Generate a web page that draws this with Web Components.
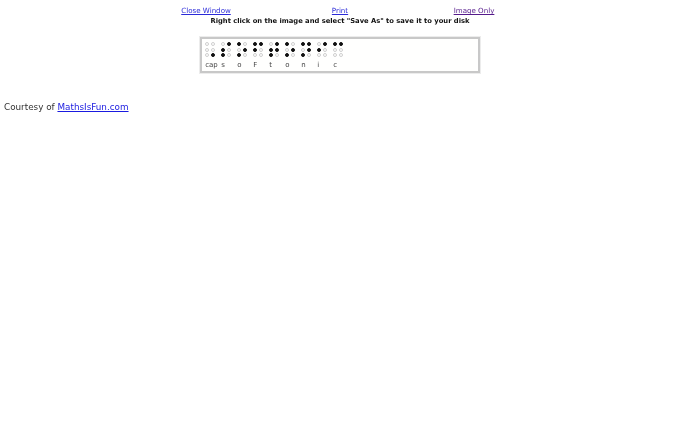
<!DOCTYPE html>
<html>
<head>
<meta charset="utf-8">
<title>Braille</title>
<style>
	html, body { margin: 0; padding: 0; background: #fff; }
	body { font-family: "DejaVu Sans", Verdana, sans-serif; color: #222; }
</style>
</head>
<body>
<print-page>
	<link-bar slot="links">
		<a href="#close">Close Window</a>
		<a href="#print">Print</a>
		<a href="#image" class="seen">Image Only</a>
	</link-bar>
	<span slot="hint">Right click on the image and select "Save As" to save it to your disk</span>
	<braille-strip slot="strip">
		<braille-cell dots="6" label="cap"></braille-cell>
		<braille-cell dots="234" label="s"></braille-cell>
		<braille-cell dots="135" label="o"></braille-cell>
		<braille-cell dots="124" label="F"></braille-cell>
		<braille-cell dots="2345" label="t"></braille-cell>
		<braille-cell dots="135" label="o"></braille-cell>
		<braille-cell dots="1345" label="n"></braille-cell>
		<braille-cell dots="24" label="i"></braille-cell>
		<braille-cell dots="14" label="c"></braille-cell>
	</braille-strip>
	<span slot="credit">Courtesy of <a href="#home" style="color:#1a1ae0">MathsIsFun.com</a></span>
</print-page>

<script>
	window.customElements.define(
		'print-page',
		class PrintPage extends HTMLElement {
			constructor() {
				super();
				this.attachShadow({ mode: 'open' });
				this.shadowRoot.innerHTML = /* html */ `
					<style>
						:host { display: block; filter: blur(0.35px); }
						.top { display: flex; flex-direction: column; align-items: center; padding-top: 5px; }
						.hint { font-size: 6.75px; line-height: 11px; font-weight: bold; color: #111; margin-top: 0; }
						.strip { margin-top: 10px; }
						.credit { margin-top: 27.5px; padding-left: 4px; font-size: 8.8px; line-height: 12px; color: #333; }
					</style>
					<div class="top">
						<slot name="links"></slot>
						<div class="hint"><slot name="hint"></slot></div>
						<div class="strip"><slot name="strip"></slot></div>
					</div>
					<div class="credit"><slot name="credit"></slot></div>
				`;
			}
		}
	);

	window.customElements.define(
		'link-bar',
		class LinkBar extends HTMLElement {
			constructor() {
				super();
				this.attachShadow({ mode: 'open' });
				this.shadowRoot.innerHTML = /* html */ `
					<style>
						:host { display: grid; grid-template-columns: repeat(3, 134px); justify-items: center; font-size: 7.1px; line-height: 11px; }
						::slotted(a) { color: #2a2ad8; }
						::slotted(a.seen) { color: #551a8b; }
					</style>
					<slot></slot>
				`;
			}
		}
	);

	window.customElements.define(
		'braille-strip',
		class BrailleStrip extends HTMLElement {
			constructor() {
				super();
				this.attachShadow({ mode: 'open' });
				this.shadowRoot.innerHTML = /* html */ `
					<style>
						:host {
							display: flex;
							box-sizing: border-box;
							width: 280px;
							height: 36px;
							padding: 3px 0 0 3.2px;
							background: #fffffe;
							border: 2px solid #c8c8c8;
							outline: 1px solid #ececec;
						}
					</style>
					<slot></slot>
				`;
			}
		}
	);

	window.customElements.define(
		'braille-cell',
		class BrailleCell extends HTMLElement {
			constructor() {
				super();
				this.attachShadow({ mode: 'open' });
				const dots = this.getAttribute('dots') || '';
				const label = this.getAttribute('label') || '';
				// braille numbering runs down the left column, then the right
				const order = [1, 4, 2, 5, 3, 6];
				const circles = order.map(n => `<i class="${dots.includes(n) ? 'on' : ''}"></i>`).join('');
				this.shadowRoot.innerHTML = /* html */ `
					<style>
						:host { display: block; width: 16px; font-size: 7px; color: #444; }
						.dots { display: grid; grid-template-columns: repeat(2, 4px); column-gap: 1.4px; row-gap: 1.5px; }
						i { box-sizing: border-box; width: 4px; height: 4px; border-radius: 50%; border: 0.6px solid #cfcfcf; }
						i.on { background: #111; border-color: #111; }
						.label { margin-top: 3.5px; line-height: 9px; white-space: nowrap; }
					</style>
					<div class="dots">${circles}</div>
					<div class="label">${label}</div>
				`;
			}
		}
	);
</script>
</body>
</html>
